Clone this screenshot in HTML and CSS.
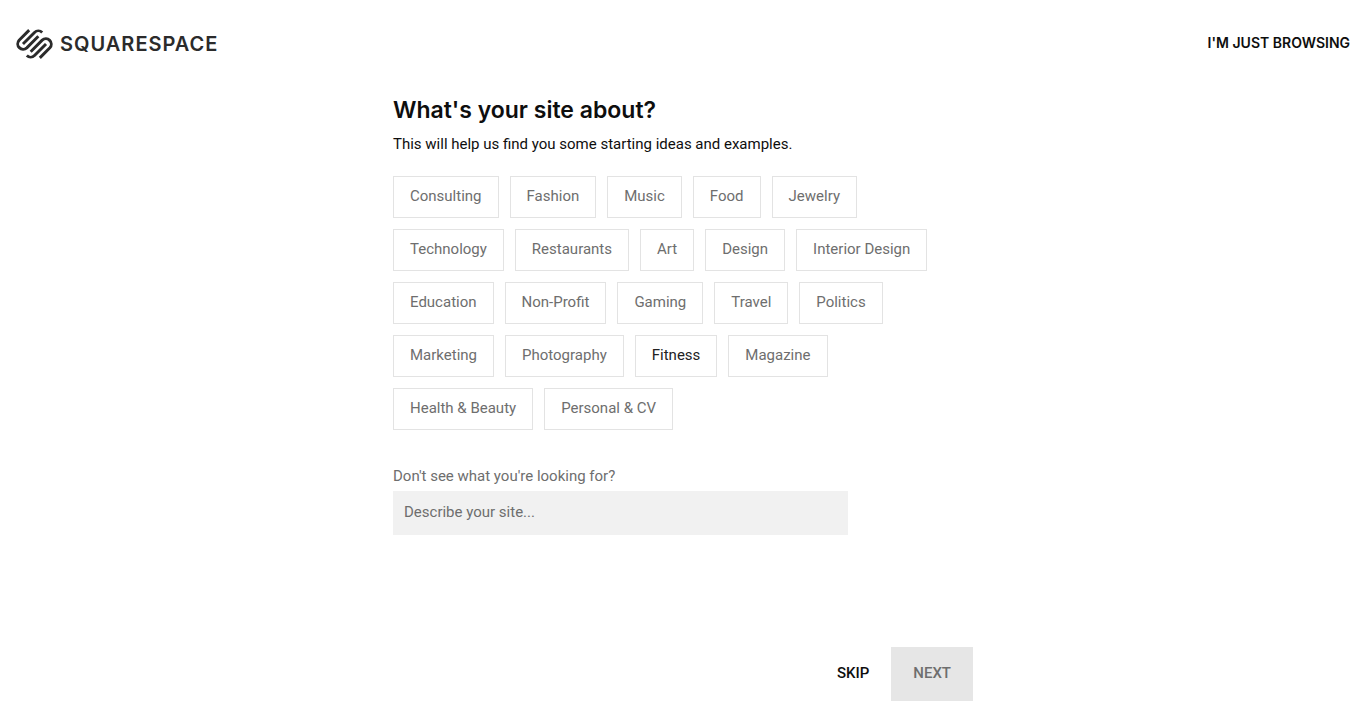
FILE: index.html
```html
<!DOCTYPE html>
<html lang="en">
<head>
    <meta charset="UTF-8">
    <meta name="viewport" content="width=device-width, initial-scale=1.0">
    <title>Squarespace</title>
    <link rel="stylesheet" href="styles.css">
</head>
<body>
    <header class="header">
        <a href="#" class="logo">
            <svg class="logo-mark" viewBox="0.2 2.5 23.6 19" aria-hidden="true">
                <path d="M8.6 3.15L2.19 9.55A3.47 3.47 0 0 0 7.09 14.45L14.44 7.1"/>
                <path d="M4.65 12L12 4.65A3.47 3.47 0 0 1 16.9 4.65"/>
                <path d="M15.4 20.85L21.81 14.45A3.47 3.47 0 0 0 16.91 9.55L9.56 16.9"/>
                <path d="M19.35 12L12 19.35A3.47 3.47 0 0 1 7.1 19.35"/>
            </svg>
            <span class="logo-text">SQUARESPACE</span>
        </a>
        <a href="#" class="browse-link">I'M JUST BROWSING</a>
    </header>

    <main class="content">
        <h1>What's your site about?</h1>
        <p class="intro">This will help us find you some starting ideas and examples.</p>

        <!-- Topics -->
        <div class="topics">
            <button type="button" class="topic">Consulting</button>
            <button type="button" class="topic">Fashion</button>
            <button type="button" class="topic">Music</button>
            <button type="button" class="topic">Food</button>
            <button type="button" class="topic">Jewelry</button>
            <button type="button" class="topic">Technology</button>
            <button type="button" class="topic">Restaurants</button>
            <button type="button" class="topic">Art</button>
            <button type="button" class="topic">Design</button>
            <button type="button" class="topic">Interior Design</button>
            <button type="button" class="topic">Education</button>
            <button type="button" class="topic">Non-Profit</button>
            <button type="button" class="topic">Gaming</button>
            <button type="button" class="topic">Travel</button>
            <button type="button" class="topic">Politics</button>
            <button type="button" class="topic">Marketing</button>
            <button type="button" class="topic">Photography</button>
            <button type="button" class="topic topic-active">Fitness</button>
            <button type="button" class="topic">Magazine</button>
            <button type="button" class="topic">Health &amp; Beauty</button>
            <button type="button" class="topic">Personal &amp; CV</button>
        </div>

        <label for="siteDescription">Don't see what you're looking for?</label>
        <input type="text" id="siteDescription" placeholder="Describe your site...">

        <!-- Navigation -->
        <div class="actions">
            <button type="button" class="skip">SKIP</button>
            <button type="button" class="next" disabled>NEXT</button>
        </div>
    </main>
</body>
</html>
```
FILE: styles.css
```css
* {
    box-sizing: border-box;
}
body {
    display: flex;
    flex-direction: column;
    min-height: 100vh;
    margin: 0;
    font-family: Roboto, sans-serif;
    font-size: 15px;
    line-height: 22px;
    color: #0e0e0e;
    background: #fff;
}
a {
    color: inherit;
    text-decoration: none;
}
button, input {
    font: inherit;
}
button {
    cursor: pointer;
}
.header {
    display: flex;
    justify-content: space-between;
    align-items: center;
    height: 88px;
    padding: 0 16px;
}
.logo {
    display: flex;
    align-items: center;
    gap: 7px;
    color: #2b2b2b;
}
.logo-mark {
    width: 37px;
    height: 30px;
    fill: none;
    stroke: currentColor;
    stroke-width: 1.85;
}
.logo-text {
    font-family: Inter, sans-serif;
    font-size: 20px;
    font-weight: 600;
    letter-spacing: 1px;
}
.browse-link {
    padding-bottom: 2px;
    font-family: Inter, sans-serif;
    font-size: 14px;
    font-weight: 600;
}
.content {
    display: flex;
    flex: 1;
    flex-direction: column;
    width: 100%;
    max-width: 580px;
    margin: 0 auto;
    padding-bottom: 27px;
}
h1 {
    margin: 6px 0 7px;
    font-family: Inter, sans-serif;
    font-size: 23px;
    font-weight: 600;
    line-height: 32px;
}
.intro {
    margin: 0 0 21px;
}
.topics {
    display: flex;
    flex-wrap: wrap;
    margin-bottom: 24px;
}
.topic {
    height: 42px;
    margin: 0 11px 11px 0;
    padding: 0 16px 2px;
    border: 1px solid #e3e3e3;
    color: #6e6e6e;
    background: #fff;
}
.topic:hover, .topic-active {
    color: #222;
}
label {
    margin-bottom: 4px;
    color: #6e6e6e;
}
input {
    width: 455px;
    max-width: 100%;
    height: 44px;
    padding: 0 11px 2px;
    border: none;
    color: #0e0e0e;
    background: #f1f1f1;
}
input::placeholder {
    color: #6e6e6e;
    opacity: 1;
}
.actions {
    display: flex;
    justify-content: flex-end;
    margin-top: auto;
}
.skip, .next {
    height: 54px;
    padding: 0 22px 2px;
    border: none;
    font-weight: 500;
    color: #0e0e0e;
    background: none;
}
.next {
    color: #6e6e6e;
    background: #e6e6e6;
}
```
